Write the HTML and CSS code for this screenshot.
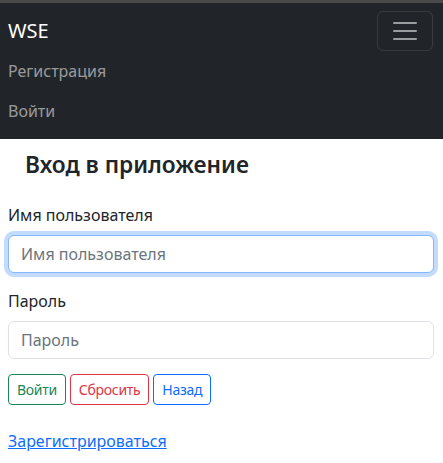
FILE: index.html
```html
<!DOCTYPE html>
<html lang="ru">
<head>
<meta charset="utf-8">
<title>WSE</title>
<link rel="stylesheet" href="styles.css">
</head>
<body>
<div class="topline"></div>
<nav class="navbar">
  <div class="navbar-top">
    <a class="brand" href="#">WSE</a>
    <button class="toggler" type="button" aria-label="Меню">
      <svg width="30" height="30" viewBox="0 0 30 30"><path d="M4 7h22M4 15h22M4 23h22" stroke="rgba(255,255,255,0.55)" stroke-width="2" stroke-linecap="round"/></svg>
    </button>
  </div>
  <ul class="nav">
    <li><a class="nav-link" href="#">Регистрация</a></li>
    <li><a class="nav-link" href="#">Войти</a></li>
  </ul>
</nav>
<main class="content">
  <h2 class="title">Вход в приложение</h2>
  <form class="form">
    <div class="field">
      <label class="label" for="u">Имя пользователя</label>
      <input class="input focused" id="u" type="text" placeholder="Имя пользователя">
    </div>
    <div class="field last">
      <label class="label" for="p">Пароль</label>
      <input class="input" id="p" type="password" placeholder="Пароль">
    </div>
    <div class="buttons">
      <button class="btn btn-green" type="submit">Войти</button>
      <button class="btn btn-red" type="reset">Сбросить</button>
      <button class="btn btn-blue" type="button">Назад</button>
    </div>
  </form>
  <a class="reg-link" href="#">Зарегистрироваться</a>
</main>
</body>
</html>
```
FILE: styles.css
```css
* { box-sizing: border-box; }
html, body { margin: 0; padding: 0; background: #fff; }
body {
  font-family: "Noto Sans", "Open Sans", sans-serif;
  font-size: 16px;
  line-height: 24px;
  color: #212529;
}
.topline { height: 3px; background: #4a4a4a; }
.navbar {
  background: #212529;
  padding: 8px 10px 8px 8px;
}
.navbar-top {
  display: flex;
  justify-content: space-between;
  align-items: center;
}
.brand {
  color: #fff;
  font-size: 20px;
  line-height: 30px;
  padding: 5px 0;
  text-decoration: none;
}
.toggler {
  width: 56px;
  height: 40px;
  padding: 4px 12px;
  background: transparent;
  border: 1px solid rgba(255,255,255,0.1);
  border-radius: 6px;
  display: flex;
  align-items: center;
  justify-content: center;
}
.toggler svg { display: block; }
.nav { list-style: none; margin: 0; padding: 0; }
.nav-link {
  display: block;
  padding: 8px 0;
  color: rgba(255,255,255,0.55);
  text-decoration: none;
}
.content { padding: 0 9px 0 8px; }
.title {
  margin: 0;
  padding: 11px 0 0 17px;
  font-size: 22.7px;
  line-height: 30px;
  font-weight: 600;
  color: #212529;
}
.form { margin-top: 23px; }
.field { margin-bottom: 16px; }
.field.last { margin-bottom: 15px; }
.label { display: block; margin-bottom: 8px; }
.input {
  display: block;
  width: 100%;
  height: 38px;
  padding: 6px 12px;
  font: inherit;
  color: #212529;
  border: 1px solid #dee2e6;
  border-radius: 6px;
  background: #fff;
  outline: none;
}
.input::placeholder { color: #6c757d; }
.input.focused {
  border-color: #86b7fe;
  box-shadow: 0 0 0 4px rgba(13,110,253,0.25);
}
.buttons { display: flex; gap: 4px; }
.btn {
  font: inherit;
  font-size: 14px;
  line-height: 21px;
  letter-spacing: -0.3px;
  padding: 4px 8px;
  background: transparent;
  border: 1px solid;
  border-radius: 4px;
}
.btn-green { color: #198754; border-color: #198754; }
.btn-red { color: #dc3545; border-color: #dc3545; }
.btn-blue { color: #0d6efd; border-color: #0d6efd; }
.reg-link {
  display: inline-block;
  margin-top: 24px;
  color: #0d6efd;
  text-decoration: underline;
}
```
